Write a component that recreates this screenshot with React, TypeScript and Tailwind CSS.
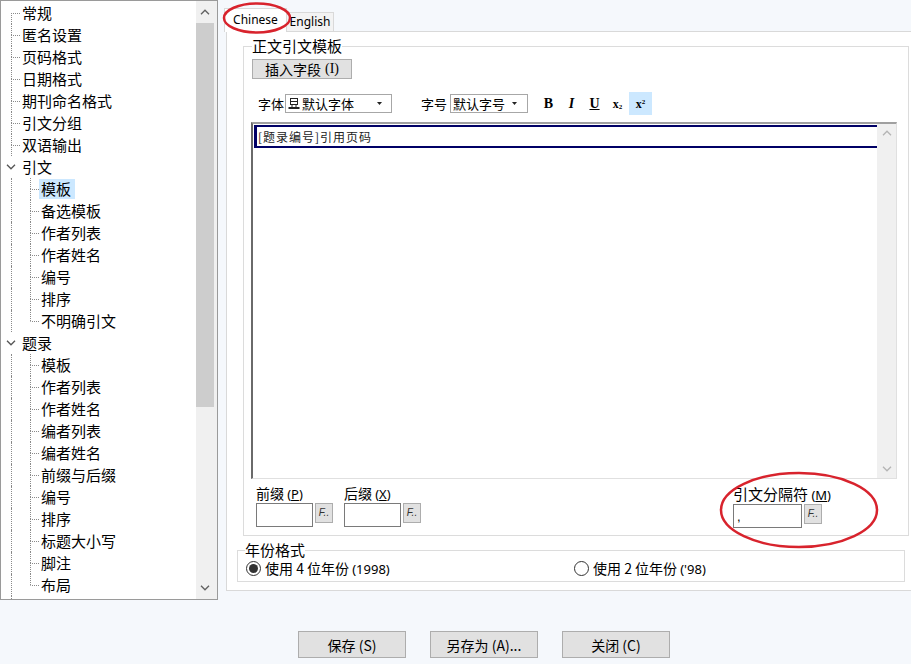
import React from "react";

type TreeNode = {
  label: string;
  level: 0 | 1;
  expanded?: boolean;
  first?: boolean;
  last?: boolean;
  selected?: boolean;
};

const nodes: TreeNode[] = [
  { label: "常规", level: 0, first: true },
  { label: "匿名设置", level: 0 },
  { label: "页码格式", level: 0 },
  { label: "日期格式", level: 0 },
  { label: "期刊命名格式", level: 0 },
  { label: "引文分组", level: 0 },
  { label: "双语输出", level: 0 },
  { label: "引文", level: 0, expanded: true },
  { label: "模板", level: 1, selected: true },
  { label: "备选模板", level: 1 },
  { label: "作者列表", level: 1 },
  { label: "作者姓名", level: 1 },
  { label: "编号", level: 1 },
  { label: "排序", level: 1 },
  { label: "不明确引文", level: 1, last: true },
  { label: "题录", level: 0, expanded: true },
  { label: "模板", level: 1 },
  { label: "作者列表", level: 1 },
  { label: "作者姓名", level: 1 },
  { label: "编者列表", level: 1 },
  { label: "编者姓名", level: 1 },
  { label: "前缀与后缀", level: 1 },
  { label: "编号", level: 1 },
  { label: "排序", level: 1 },
  { label: "标题大小写", level: 1 },
  { label: "脚注", level: 1 },
  { label: "布局", level: 1, last: true },
];

function Connector({ top, bottom }: { top: boolean; bottom: boolean }) {
  return (
    <div className="flex w-[9px] shrink-0 flex-col">
      <div
        className={`h-[11px] border-l border-dotted ${
          top ? "border-l-[#8a8a8a]" : "border-l-transparent"
        }`}
      />
      <div
        className={`flex-1 border-l border-t border-dotted border-t-[#8a8a8a] ${
          bottom ? "border-l-[#8a8a8a]" : "border-l-transparent"
        }`}
      />
    </div>
  );
}

function Chevron({ up, color }: { up?: boolean; color: string }) {
  return (
    <svg width="10" height="6" viewBox="0 0 10 6">
      <path
        d={up ? "M1 5.2 L5 1.2 L9 5.2" : "M1 0.8 L5 4.8 L9 0.8"}
        fill="none"
        stroke={color}
        strokeWidth="1.3"
      />
    </svg>
  );
}

function TreeRow({ n }: { n: TreeNode }) {
  return (
    <div className="flex h-[22px] shrink-0 items-stretch">
      {n.level === 0 ? (
        n.expanded ? (
          <div className="flex w-[19px] shrink-0 items-center justify-center pl-[1px]">
            <Chevron color="#555555" />
          </div>
        ) : (
          <>
            <div className="w-[10px] shrink-0" />
            <Connector top={!n.first} bottom={true} />
          </>
        )
      ) : (
        <>
          <div className="w-[10px] shrink-0" />
          <div className="w-[19px] shrink-0 border-l border-dotted border-l-[#8a8a8a]" />
          <Connector top={true} bottom={!n.last} />
        </>
      )}
      <div className="flex items-center">
        <span
          className={`whitespace-nowrap px-[2px] leading-[20px] ${
            n.selected ? "bg-[#cce8ff] pr-[4px]" : ""
          }`}
        >
          {n.label}
        </span>
      </div>
    </div>
  );
}

function TreePanel() {
  return (
    <div className="flex h-[600px] w-[218px] shrink-0 border border-[#9a9a9a] bg-white">
      <div className="flex flex-1 flex-col overflow-hidden pt-[1px] text-[15px] text-black">
        {nodes.map((n, i) => (
          <TreeRow key={i} n={n} />
        ))}
        <div className="flex flex-1">
          <div className="w-[10px] shrink-0" />
          <div className="border-l border-dotted border-l-[#8a8a8a]" />
        </div>
      </div>
      <div className="flex w-[21px] shrink-0 flex-col bg-[#f0f0f0]">
        <div className="flex h-[22px] w-[18px] items-center justify-center">
          <Chevron up color="#606060" />
        </div>
        <div className="h-[384px] w-[18px] bg-[#cdcdcd]" />
        <div className="flex-1" />
        <div className="flex h-[22px] w-[18px] items-center justify-center">
          <Chevron color="#606060" />
        </div>
      </div>
    </div>
  );
}

function FontIcon() {
  return (
    <svg width="12" height="13" viewBox="0 0 12 13">
      <rect x="2.5" y="1.5" width="7" height="6" fill="none" stroke="#222" strokeWidth="1" />
      <line x1="2.5" y1="4.5" x2="9.5" y2="4.5" stroke="#222" strokeWidth="1" />
      <line x1="4" y1="7.5" x2="4" y2="10" stroke="#222" strokeWidth="1" />
      <line x1="8" y1="7.5" x2="8" y2="10" stroke="#222" strokeWidth="1" />
      <rect x="0.5" y="10" width="11" height="2" fill="#222" />
    </svg>
  );
}

function DropArrow() {
  return (
    <svg width="5" height="3" viewBox="0 0 5 3">
      <path d="M0 0 L5 0 L2.5 3 Z" fill="#222" />
    </svg>
  );
}

function FButton() {
  return (
    <div className="ml-[2px] flex h-[20px] w-[18px] shrink-0 items-center justify-center border border-[#adadad] bg-[#e1e1e1] font-['Liberation_Sans',sans-serif] text-[10px] italic leading-none text-[#333]">
      F..
    </div>
  );
}

function Field({
  label,
  hot,
  width,
  value,
  big,
}: {
  label: string;
  hot: string;
  width: string;
  value?: string;
  big?: boolean;
}) {
  return (
    <div className="flex flex-col">
      <div className={`leading-[17px] whitespace-nowrap ${big ? "text-[15px]" : "text-[14px]"}`}>
        {label}{" "}
        <span className="font-['Noto_Sans',sans-serif] text-[13px]">
          (<span className="underline">{hot}</span>)
        </span>
      </div>
      <div className="flex items-start">
        <div
          className={`flex h-[24px] items-center border border-[#7a7a7a] bg-white pl-[3px] font-['Liberation_Sans',sans-serif] text-[13px] leading-none ${width}`}
        >
          {value}
        </div>
        <FButton />
      </div>
    </div>
  );
}

function FormatBtn({ children, active }: { children: React.ReactNode; active?: boolean }) {
  return (
    <div
      className={`flex h-[23px] w-[23px] items-center justify-center font-['Liberation_Serif',serif] ${
        active ? "bg-[#cce8ff]" : ""
      }`}
    >
      {children}
    </div>
  );
}

function ButtonBar() {
  const labels = ["保存 (S)", "另存为 (A)...", "关闭 (C)"];
  return (
    <div className="mt-[31px] flex gap-[24px] pl-[298px]">
      {labels.map((l) => (
        <div
          key={l}
          className="flex h-[27px] w-[108px] items-center justify-center border border-[#adadad] bg-[#e1e1e1] text-[14px] leading-none"
        >
          {l}
        </div>
      ))}
    </div>
  );
}

export default function App() {
  return (
    <div className="relative h-[664px] w-[911px] overflow-hidden bg-[#f5f8fc] font-['Noto_Sans_CJK_SC',sans-serif] text-black">
      <div className="flex h-[600px]">
        <TreePanel />
        <div className="flex h-[591px] w-[693px] flex-col">
          {/* tabs */}
          <div className="flex h-[31px] shrink-0 items-end pl-[6px] font-['Noto_Sans',sans-serif] text-[12px]">
            <div className="relative z-10 -mb-px flex h-[24px] w-[63px] items-center justify-center border border-b-0 border-[#d9d9d9] bg-white pb-[2px]">
              Chinese
            </div>
            <div className="flex h-[19px] w-[47px] items-center justify-center border border-b-0 border-l-0 border-[#d9d9d9] bg-[#f3f3f3]">
              English
            </div>
          </div>
          {/* panel */}
          <div className="ml-[8px] flex flex-1 flex-col border border-r-0 border-[#d9d9d9] bg-white">
            <fieldset className="ml-[16px] mr-[2px] mt-[5px] border border-[#dcdcdc]">
              <legend className="ml-[8px] text-[15px] leading-[18px]">正文引文模板</legend>
              <div className="mt-[4px] pl-[8px]">
                <div className="flex h-[20px] w-[100px] items-center justify-center border border-[#adadad] bg-[#e1e1e1] text-[14px] leading-none">
                  插入字段{" "}
                  <span className="ml-[4px] font-['Liberation_Serif',serif] text-[14px]">(I)</span>
                </div>
              </div>
              {/* toolbar */}
              <div className="mt-[13px] flex h-[23px] items-center pl-[14px] text-[13px]">
                <span className="leading-none">字体</span>
                <div className="ml-[1px] flex h-[19px] w-[107px] items-center border border-[#a7a7a7] bg-white">
                  <div className="ml-[2px] flex items-center">
                    <FontIcon />
                  </div>
                  <span className="ml-[2px] text-[13px] leading-none">默认字体</span>
                  <div className="ml-auto mr-[9px] flex items-center">
                    <DropArrow />
                  </div>
                </div>
                <span className="ml-[29px] leading-none">字号</span>
                <div className="ml-[3px] flex h-[19px] w-[78px] items-center border border-[#a7a7a7] bg-white">
                  <span className="ml-[2px] text-[13px] leading-none">默认字号</span>
                  <div className="ml-auto mr-[10px] flex items-center">
                    <DropArrow />
                  </div>
                </div>
                <div className="ml-[9px] flex">
                  <FormatBtn>
                    <span className="text-[14px] font-bold leading-none">B</span>
                  </FormatBtn>
                  <FormatBtn>
                    <span className="text-[14px] font-bold italic leading-none">I</span>
                  </FormatBtn>
                  <FormatBtn>
                    <span className="text-[14px] font-bold leading-none underline">U</span>
                  </FormatBtn>
                  <FormatBtn>
                    <span className="text-[12px] font-bold leading-none">
                      x<sub className="text-[7px]">2</sub>
                    </span>
                  </FormatBtn>
                  <FormatBtn active>
                    <span className="text-[12px] font-bold leading-none">
                      x<sup className="text-[7px]">2</sup>
                    </span>
                  </FormatBtn>
                </div>
              </div>
              {/* editor */}
              <div className="ml-[7px] mr-[11px] mt-[7px] flex h-[357px] border-b border-l-2 border-r border-t-2 border-b-[#e0e0e0] border-l-[#6a6a6a] border-r-[#e0e0e0] border-t-[#a0a0a0] bg-white">
                <div className="flex-1">
                  <div className="ml-[1px] mt-[1px] flex h-[23px] items-center border-b-2 border-l-[3px] border-t-2 border-[#000066] pl-[1px] text-[12px] leading-none tracking-[1px] text-[#222]">
                    [题录编号]引用页码
                  </div>
                </div>
                <div className="flex w-[19px] flex-col bg-[#f0f0f0]">
                  <div className="flex h-[18px] items-center justify-center">
                    <Chevron up color="#b4b4b4" />
                  </div>
                  <div className="flex-1" />
                  <div className="flex h-[18px] items-center justify-center">
                    <Chevron color="#b4b4b4" />
                  </div>
                </div>
              </div>
              {/* prefix/suffix */}
              <div className="mt-[6px] flex pb-[7px] pl-[12px]">
                <div className="w-[88px]">
                  <Field label="前缀" hot="P" width="w-[57px]" />
                </div>
                <div className="w-[389px]">
                  <Field label="后缀" hot="X" width="w-[57px]" />
                </div>
                <div>
                  <Field label="引文分隔符" hot="M" width="w-[69px]" value="," big />
                </div>
              </div>
            </fieldset>
            <fieldset className="ml-[10px] mr-[6px] mt-[6px] border border-[#dcdcdc]">
              <legend className="ml-[7px] text-[15px] leading-[16px]">年份格式</legend>
              <div className="mt-[1px] flex h-[18px] items-center pl-[8px] text-[14px] leading-none">
                <div className="flex w-[328px] items-center">
                  <span className="flex h-[15px] w-[15px] items-center justify-center rounded-full border border-[#333]">
                    <span className="h-[9px] w-[9px] rounded-full bg-[#333]" />
                  </span>
                  <span className="ml-[4px] whitespace-nowrap">
                    使用 4 位年份{" "}
                    <span className="font-['Noto_Sans',sans-serif] text-[13px]">(1998)</span>
                  </span>
                </div>
                <div className="flex items-center">
                  <span className="h-[15px] w-[15px] rounded-full border border-[#333]" />
                  <span className="ml-[4px] whitespace-nowrap">
                    使用 2 位年份{" "}
                    <span className="font-['Noto_Sans',sans-serif] text-[13px]">('98)</span>
                  </span>
                </div>
              </div>
              <div className="h-[4px]" />
            </fieldset>
          </div>
        </div>
      </div>
      <ButtonBar />
      <svg
        className="pointer-events-none absolute left-0 top-0 z-20"
        width="911"
        height="664"
        viewBox="0 0 911 664"
      >
        <ellipse cx="257" cy="18" rx="33" ry="14.5" fill="none" stroke="#d8232d" strokeWidth="2.5" />
        <ellipse cx="799" cy="510" rx="78" ry="37" fill="none" stroke="#d8232d" strokeWidth="2.5" />
      </svg>
    </div>
  );
}
